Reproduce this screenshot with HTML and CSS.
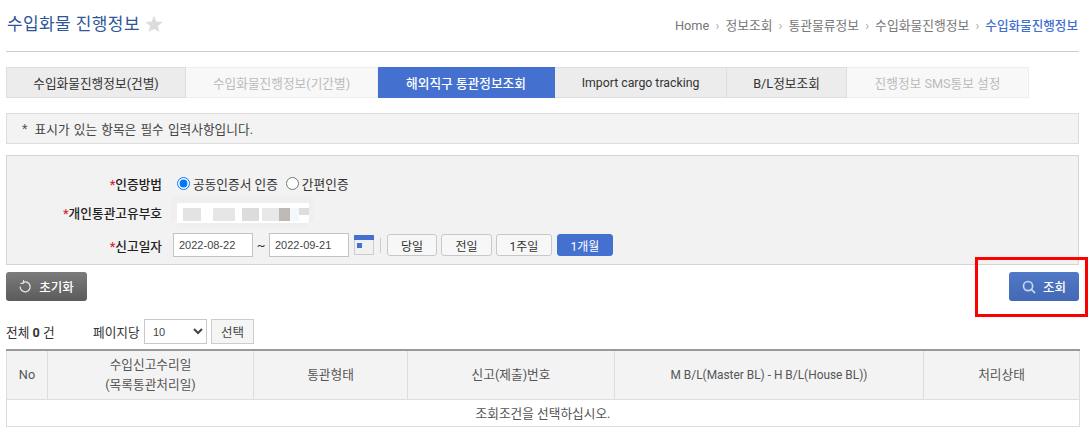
FILE: index.html
```html
<!DOCTYPE html>
<html lang="ko">
<head>
<meta charset="utf-8">
<title>수입화물 진행정보</title>
<link rel="stylesheet" href="styles.css">
</head>
<body>
<div class="page">
  <header class="head">
    <h1 class="title">수입화물 진행정보
      <svg class="star" viewBox="0 0 24 24" width="18" height="18"><path d="M12 1l3.2 7.6 8.3.7-6.3 5.4 1.9 8.1L12 18.5l-7.1 4.3 1.9-8.1L.5 9.3l8.3-.7z"/></svg>
    </h1>
    <nav class="crumbs">
      <span>Home</span><i class="sep">›</i><span>정보조회</span><i class="sep">›</i><span>통관물류정보</span><i class="sep">›</i><span>수입화물진행정보</span><i class="sep">›</i><b>수입화물진행정보</b>
    </nav>
  </header>

  <div class="tabs">
    <div class="tab">수입화물진행정보(건별)</div>
    <div class="tab off">수입화물진행정보(기간별)</div>
    <div class="tab on">해외직구 통관정보조회</div>
    <div class="tab en-tab">Import cargo tracking</div>
    <div class="tab">B/L정보조회</div>
    <div class="tab off">진행정보 SMS통보 설정</div>
  </div>

  <div class="notice"><em>*</em> 표시가 있는 항목은 필수 입력사항입니다.</div>

  <form class="panel">
    <div class="row r1">
      <div class="label"><em>*</em>인증방법</div>
      <div class="val">
        <label class="radio"><input type="radio" name="m" checked>공동인증서 인증</label>
        <label class="radio"><input type="radio" name="m">간편인증</label>
      </div>
    </div>
    <div class="row r2">
      <div class="label"><em>*</em>개인통관고유부호</div>
      <div class="val">
        <svg class="mosaic" width="143" height="30" viewBox="0 0 143 30">
          <rect x="0" y="0" width="143" height="30" fill="#efefef"/>
          <rect x="0" y="24" width="6" height="6" fill="#f2f2f2"/>
          <rect x="6" y="6" width="132" height="20" fill="#fff"/>
          <rect x="137" y="24" width="6" height="6" fill="#f2f2f2"/>
          <rect x="12" y="11" width="18" height="13" fill="#e3e3e3"/>
          <rect x="42" y="11" width="22" height="13" fill="#e6e6e6"/>
          <rect x="71" y="11" width="17" height="13" fill="#dcdcdc"/>
          <rect x="91" y="11" width="17" height="13" fill="#e8e8e8"/>
          <rect x="108" y="11" width="11" height="13" fill="#bdb9b7"/>
          <rect x="119" y="11" width="9" height="13" fill="#f2f8fc"/>
          <rect x="128" y="11" width="10" height="7" fill="#ddd"/>
        </svg>
      </div>
    </div>
    <div class="row r3">
      <div class="label"><em>*</em>신고일자</div>
      <div class="val dates">
        <input class="date" type="text" value="2022-08-22">
        <span class="tilde">~</span>
        <input class="date" type="text" value="2022-09-21">
        <svg class="cal" width="20" height="20" viewBox="0 0 20 20"><rect x=".5" y=".5" width="19" height="19" fill="#f1f1f1" stroke="#ccc"/><rect width="20" height="5" fill="#4470cf"/><rect x="3" y="8" width="5" height="5" fill="#4470cf"/></svg>
        <span class="vr"></span>
        <button type="button" class="pill w50">당일</button>
        <button type="button" class="pill w51">전일</button>
        <button type="button" class="pill w56">1주일</button>
        <button type="button" class="pill w56 sel">1개월</button>
      </div>
    </div>
  </form>

  <div class="actions">
    <button type="button" class="act reset">
      <svg width="13" height="13" viewBox="0 0 13 13" fill="none" stroke="#e8e8e8" stroke-width="1.3"><path d="M3.6 2.6a5 5 0 1 1-2.4 4"/><path d="M4.6 0v3.4H1.4" stroke-width="1"/></svg>
      초기화
    </button>
    <button type="button" class="act search">
      <svg width="14" height="14" viewBox="0 0 15 15" fill="none" stroke="#c9d6ee" stroke-width="1.8"><circle cx="6.5" cy="6.5" r="4.9"/><path d="M10 10l4 4"/></svg>
      조회
    </button>
  </div>

  <div class="paging">
    <span class="total">전체 <b>0</b> 건</span>
    <span class="per">페이지당</span>
    <select class="size"><option>10</option></select>
    <button type="button" class="choose">선택</button>
  </div>

  <table class="grid">
    <colgroup>
      <col class="c1"><col class="c2"><col class="c3"><col class="c4"><col class="c5"><col class="c6">
    </colgroup>
    <thead>
      <tr><th>No</th><th>수입신고수리일<br>(목록통관처리일)</th><th>통관형태</th><th>신고(제출)번호</th><th class="en-th">M B/L(Master BL) - H B/L(House BL))</th><th>처리상태</th></tr>
    </thead>
    <tbody>
      <tr><td colspan="6">조회조건을 선택하십시오.</td></tr>
    </tbody>
  </table>
</div>
<div class="callout"></div>
</body>
</html>
```
FILE: styles.css
```css
* { box-sizing: border-box; }
html, body { margin: 0; padding: 0; background: #fff; }
body {
  width: 1090px; height: 435px; overflow: hidden; position: relative;
  font-family: Roboto, "Noto Sans CJK KR", sans-serif;
  font-size: 12.7px; color: #333;
}
.page { width: 1079px; padding-left: 6px; }
em { font-style: normal; color: #d9263a; }

.head { height: 52px; border-bottom: 1px solid #ccc; display: flex; justify-content: space-between; align-items: flex-start; padding-right: 1px; }
.title { margin: 11px 0 0 1px; font-size: 17px; line-height: 26px; font-weight: 400; color: #2f5597; letter-spacing: .4px; display: flex; align-items: center; gap: 5px; white-space: pre-line; }
.star { fill: #dcdcdc; }
.crumbs { display: flex; align-items: center; margin-top: 17px; line-height: 18px; font-size: 12.8px; color: #777; }
.crumbs b { font-weight: 500; color: #3f6fd0; font-size: 12.6px; }
.sep { font-style: normal; color: #aaa; width: 16px; text-align: center; }

.tabs { display: grid; grid-template-columns: 180px 192px 177px 172px 120px 182px; margin-top: 15px; height: 31px; }
.tab { border: 1px solid #ddd; background: #ececec; display: flex; align-items: center; justify-content: center; color: #333; }
.tab + .tab { border-left: 0; }
.tab.off { background: #f8f8f8; color: #bbb; border-color: #eee; }
.tab.on { background: #4470cf; color: #fff; border-color: #4470cf; font-weight: 500; }
.tab.en-tab { font-size: 12.3px; }

.notice { margin-top: 15px; height: 31px; border: 1px solid #ddd; background: #f3f3f3; padding-left: 15px; display: flex; align-items: center; gap: 3px; color: #444; white-space: pre; word-spacing: 1px; }
.notice em { color: #555; }

.panel { margin-top: 11px; height: 110px; border: 1px solid #d5d5d5; background: #f2f2f2; padding-top: 13px; }
.row { display: flex; align-items: center; }
.r1 { height: 28px; }
.r2 { height: 30px; }
.r3 { height: 32px; margin-top: 2px; }
.label { width: 155px; text-align: right; font-weight: 500; color: #222; flex: none; }
.val { margin-left: 11px; display: flex; align-items: center; }
.r2 .val { margin-left: 9px; }
.mosaic { display: block; }
.radio { display: flex; align-items: center; margin-right: 4px; color: #333; }
.radio input { margin: 0 3px 0 4px; width: 13px; height: 13px; }
.date { width: 80px; height: 24px; border: 1px solid #c4c4c4; background: #fff; font: 11px "Liberation Sans", sans-serif; color: #444; padding: 0 5px; }
.tilde { width: 16px; text-align: center; }
.cal { margin-left: 5px; }
.vr { width: 1px; height: 15px; background: #ccc; margin: 0 6px 0 6px; }
.pill { height: 22px; border: 1px solid #c8c8c8; border-radius: 3px; background: #f7f7f7; font: 12px Roboto, "Noto Sans CJK KR", sans-serif; color: #333; padding: 0; margin-right: 4px; }
.w50 { width: 50px; }
.w51 { width: 51px; }
.w56 { width: 56px; margin-right: 5px; }
.pill.sel { background: #4470cf; border-color: #4470cf; color: #fff; }

.actions { margin-top: 7px; display: flex; justify-content: space-between; }
.act { height: 29px; border: 0; border-radius: 3px; color: #fff; font: 500 12.5px Roboto, "Noto Sans CJK KR", sans-serif; display: flex; align-items: center; justify-content: center; gap: 7px; padding: 0; }
.reset { width: 81px; background: linear-gradient(#7c7c7c, #5b5b5b); }
.search { width: 70px; background: linear-gradient(#5079c7, #4468b4); gap: 7px; }

.paging { margin-top: 18px; height: 25px; display: flex; align-items: center; color: #333; }
.total { width: 87px; }
.total b { font-weight: 700; }
.per { width: 51px; }
.size { width: 63px; height: 25px; border: 1px solid #c8c8c8; background: #fff; font: 11px "Liberation Sans", sans-serif; color: #444; padding-left: 4px; }
.choose { width: 43px; height: 25px; margin-left: 4px; border: 1px solid #ccc; background: #f5f5f5; font: 12.5px Roboto, "Noto Sans CJK KR", sans-serif; color: #444; padding: 0; }

.grid { margin-top: 5px; width: 1073px; border-collapse: collapse; table-layout: fixed; color: #555; }
.c1 { width: 41px; } .c2 { width: 206px; } .c3 { width: 154px; } .c4 { width: 207px; } .c5 { width: 309px; } .c6 { width: 156px; }
.grid th { height: 49px; background: #f3f3f3; font-weight: 400; line-height: 20px; border: 1px solid #ddd; border-top: 2px solid #999; padding: 0; }
.grid th.en-th { font-size: 11.9px; }
.grid td { height: 27px; text-align: center; border: 1px solid #ddd; padding: 0; }

.callout { position: absolute; left: 975px; top: 257px; width: 113px; height: 60px; border: 3px solid #f00; }
```
